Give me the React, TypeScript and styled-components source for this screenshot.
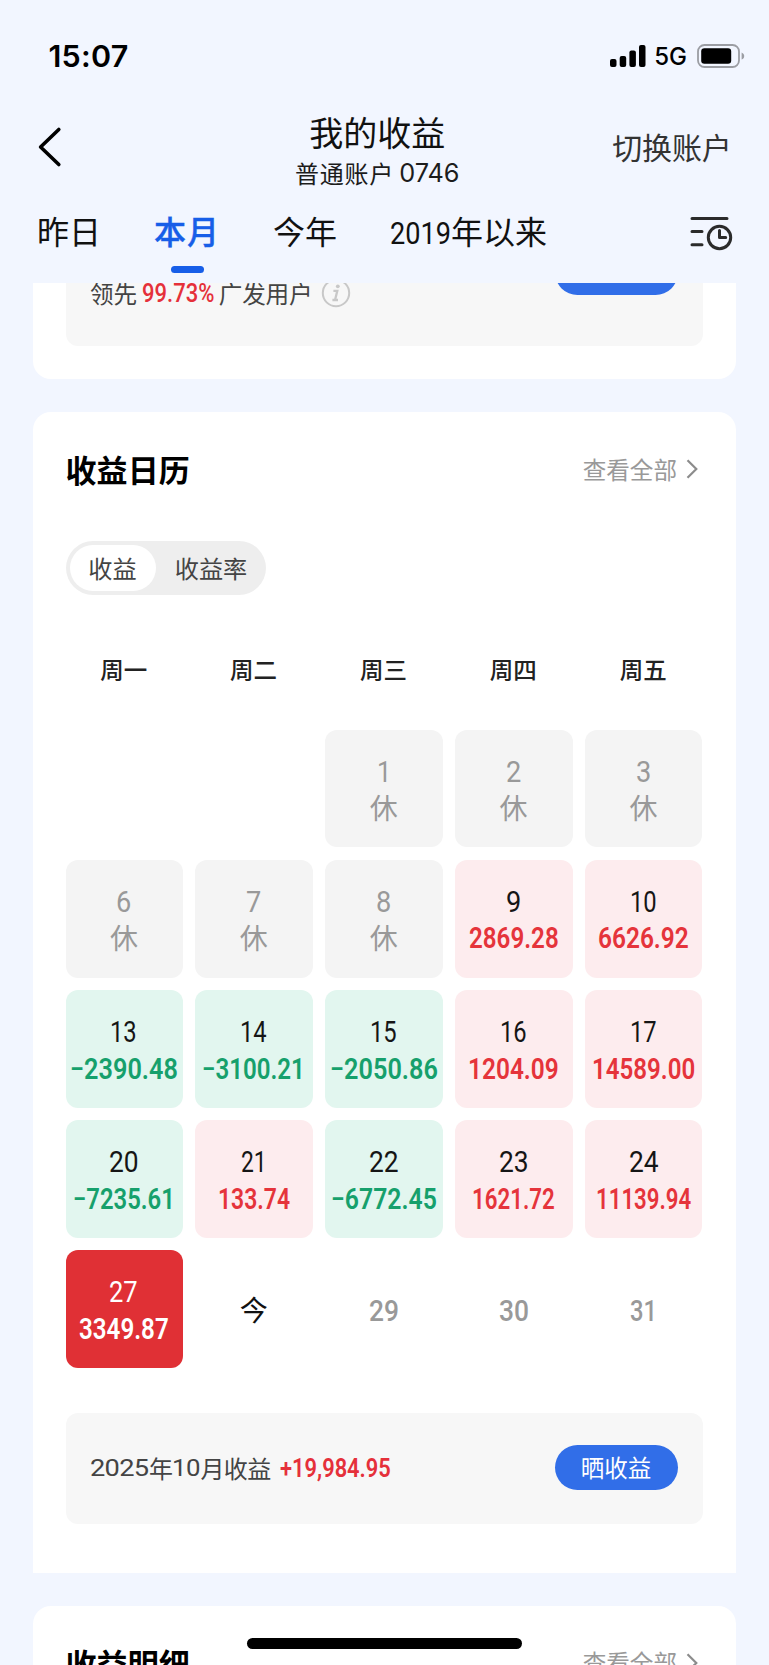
import React, { useLayoutEffect, useRef, useState } from "react";
import styled, { createGlobalStyle, css } from "styled-components";

const Global = createGlobalStyle`
  * { box-sizing: border-box; }
  html, body { margin: 0; padding: 0; background: #f2f6ff; }
  body { font-family: "Noto Sans CJK SC", sans-serif; color: #111; overflow: hidden; }
`;

const Screen = styled.div`
  width: 769px;
  height: 1665px;
  background: #f2f6ff;
  overflow: hidden;
  display: flex;
  flex-direction: column;
  position: relative;
`;

/* Condensed numerals: the text is squeezed to the given width */
const FitBox = styled.span<{ $w: number }>`
  display: inline-block;
  width: ${(p) => p.$w}px;
  white-space: nowrap;
  font-family: Roboto, "Noto Sans CJK SC", sans-serif;
`;
const FitInner = styled.span`
  display: inline-block;
  transform-origin: 0 50%;
`;

function Fit({ w, children }: { w: number; children: React.ReactNode }) {
  const ref = useRef<HTMLSpanElement>(null);
  const [scale, setScale] = useState(1);
  useLayoutEffect(() => {
    if (ref.current) setScale(w / ref.current.offsetWidth);
  }, [w, children]);
  return (
    <FitBox $w={w}>
      <FitInner ref={ref} style={{ transform: `scaleX(${scale})` }}>
        {children}
      </FitInner>
    </FitBox>
  );
}

const StatusBar = styled.div`
  height: 112px;
  flex: none;
  display: flex;
  justify-content: space-between;
  align-items: center;
  padding: 0 23px 0 48.5px;
  font-family: Inter, sans-serif;
  color: #000;
`;
const Clock = styled.div`
  font-size: 30.5px;
  font-weight: 600;
  line-height: 36px;
  letter-spacing: 0.2px;
`;
const StatusIcons = styled.div`
  display: flex;
  align-items: center;
`;
const Network = styled.span`
  font-size: 24px;
  font-weight: 500;
  line-height: 28px;
  margin: 2px 10px 0 8px;
`;

const NavBar = styled.div`
  height: 82px;
  flex: none;
  display: grid;
  grid-template-columns: 1fr 200px 1fr;
  align-items: start;
  padding: 0 37.5px 0 36px;
`;
const Back = styled.div`
  padding-top: 14px;
  svg { display: block; }
`;
const NavTitles = styled.div`
  display: flex;
  flex-direction: column;
  align-items: center;
  margin-left: -13px;
`;
const Title = styled.div`
  font-size: 34px;
  line-height: 44px;
  margin-top: -2.5px;
  white-space: nowrap;
`;
const SubTitle = styled.div`
  font-size: 24px;
  line-height: 36px;
  letter-spacing: 0.8px;
  margin-top: 1.5px;
  white-space: nowrap;
  display: flex;
  color: #1c1c1c;
`;
const SubNumber = styled.span`
  font-family: Inter, sans-serif;
  font-size: 25.3px;
  letter-spacing: 0;
  margin-left: 5px;
`;
const Switch = styled.div`
  justify-self: end;
  font-size: 30px;
  line-height: 40px;
  padding-top: 13.5px;
  letter-spacing: -0.2px;
  color: #333;
  white-space: nowrap;
`;

const Tabs = styled.div`
  height: 89px;
  flex: none;
  display: flex;
  align-items: flex-start;
  padding: 16px 36.5px 0 37px;
`;
const Tab = styled.div<{ $active?: boolean; $gap: number }>`
  display: flex;
  flex-direction: column;
  align-items: center;
  margin-right: ${(p) => p.$gap}px;
  font-size: 32px;
  line-height: 41px;
  white-space: nowrap;
  ${(p) =>
    p.$active &&
    css`
      color: #175ee8;
      font-weight: 500;
      -webkit-text-stroke: 0.4px #175ee8;
      letter-spacing: 1px;
    `}
`;
const Underline = styled.div`
  width: 33px;
  height: 7px;
  border-radius: 3.5px;
  background: #175ee8;
  margin: 15px 0 0 1px;
`;
const FilterIcon = styled.div`
  margin: 3px 0 0 auto;
  svg { display: block; }
`;

const Scroll = styled.div`
  flex: 1;
  min-height: 0;
  overflow: hidden;
  padding: 0 33.5px 0 33px;
`;
const Card = styled.div<{ $square?: boolean; $h: number; $tail?: boolean }>`
  height: ${(p) => p.$h}px;
  background: #fff;
  border-radius: ${(p) => (p.$tail ? "0 0 18px 18px" : p.$square ? "18px 18px 0 0" : "18px")};
  padding: 0 33px 0 32.5px;
  margin-bottom: 32.9px;
`;
const RankBox = styled.div`
  height: 63px;
  background: #f7f7f7;
  border-radius: 0 0 12px 12px;
  padding: 0 25px 0 24.5px;
  display: flex;
  justify-content: space-between;
  align-items: flex-start;
`;
const SummaryBox = styled.div`
  height: 111px;
  background: #f7f7f7;
  border-radius: 12px;
  margin-top: 44.9px;
  padding: 0 25px 0 24.5px;
  display: flex;
  justify-content: space-between;
  align-items: center;
`;
const Line = styled.div<{ $rank?: boolean }>`
  display: flex;
  align-items: center;
  font-size: ${(p) => (p.$rank ? 23.6 : 24)}px;
  line-height: 34px;
  letter-spacing: ${(p) => (p.$rank ? "-0.2px" : "-0.6px")};
  margin-top: ${(p) => (p.$rank ? "-6.8px" : "-0.5px")};
  color: #444;
  white-space: nowrap;
`;
const Up = styled.span<{ $rank?: boolean }>`
  color: #e5303a;
  font-size: 26px;
  font-weight: ${(p) => (p.$rank ? 500 : 600)};
  letter-spacing: 0;
  margin: 0 5px 0 ${(p) => (p.$rank ? 5 : 9)}px;
  display: inline-flex;
`;
const InfoIcon = styled.span`
  margin-left: 9px;
  svg { display: block; }
`;
const Pill = styled.div<{ $clipped?: boolean }>`
  width: 123px;
  height: 45px;
  flex: none;
  border-radius: 22.5px;
  background: #316ee8;
  color: #fff;
  font-size: 23.5px;
  line-height: 44px;
  text-align: center;
  margin-top: ${(p) => (p.$clipped ? "-33px" : "-1px")};
`;

const CardHead = styled.div`
  display: flex;
  justify-content: space-between;
  align-items: center;
  padding-top: 37px;
  height: 80px;
`;
const CardTitle = styled.div`
  font-size: 31px;
  line-height: 44px;
  font-weight: 700;
  color: #000;
  white-space: nowrap;
  letter-spacing: 0.1px;
  margin-top: -3px;
`;
const More = styled.div`
  display: flex;
  align-items: center;
  font-size: 23.6px;
  line-height: 34px;
  color: #999;
  padding-right: 4.5px;
  margin-top: -4px;
  white-space: nowrap;
  svg { margin: 1px 0 0 9px; }
`;

const Segmented = styled.div`
  width: 200.5px;
  height: 53.5px;
  margin-top: 49px;
  border-radius: 27px;
  background: #eee;
  padding: 4px;
  display: flex;
`;
const Segment = styled.div<{ $on?: boolean }>`
  flex: none;
  width: ${(p) => (p.$on ? 86 : 111)}px;
  height: 45.5px;
  border-radius: 23px;
  background: ${(p) => (p.$on ? "#fff" : "transparent")};
  font-size: 24.2px;
  line-height: 46px;
  text-align: center;
  color: #444;
`;

const Grid = styled.div`
  display: grid;
  grid-template-columns: repeat(5, 117.4px);
  column-gap: 12.5px;
  row-gap: 12.5px;
`;
const WeekRow = styled(Grid)`
  margin-top: 54.8px;
  margin-bottom: 40.4px;
`;
const Weekday = styled.div`
  text-align: center;
  font-size: 23.5px;
  line-height: 40px;
  font-weight: 500;
  padding-right: 1px;
  color: #222;
`;

type Kind = "rest" | "up" | "down" | "selected" | "plain" | "none";
const fills: Record<Kind, string> = {
  rest: "#f4f4f4",
  up: "#fdecee",
  down: "#e2f6ef",
  selected: "#e03035",
  plain: "transparent",
  none: "transparent",
};
const dateInk: Record<Kind, string> = {
  rest: "#999",
  up: "#151515",
  down: "#151515",
  selected: "#fff",
  plain: "#999",
  none: "#999",
};
const amountInk: Record<Kind, string> = {
  rest: "#999",
  up: "#e5343b",
  down: "#16a06c",
  selected: "#fff",
  plain: "#999",
  none: "#999",
};
const Cell = styled.div<{ $kind: Kind }>`
  height: 117.6px;
  border-radius: 12px;
  background: ${(p) => fills[p.$kind]};
  display: flex;
  flex-direction: column;
  align-items: center;
  padding: 21px 0.5px 0 0;
`;
const DateNo = styled.div<{ $kind: Kind }>`
  font-size: 29px;
  line-height: 36px;
  height: 36px;
  color: ${(p) => dateInk[p.$kind]};
`;
const Amount = styled.div<{ $kind: Kind }>`
  font-size: 29px;
  line-height: 36px;
  font-weight: 600;
  margin-top: 0.5px;
  color: ${(p) => amountInk[p.$kind]};
`;
const Rest = styled.div`
  font-size: 28px;
  line-height: 36px;
  margin-top: 2.4px;
  color: #999;
`;
const Future = styled.div<{ $today?: boolean }>`
  font-size: ${(p) => (p.$today ? 28 : 29)}px;
  line-height: 36px;
  margin-top: ${(p) => (p.$today ? 20 : 19)}px;
  font-weight: ${(p) => (p.$today ? 400 : 500)};
  color: ${(p) => (p.$today ? "#111" : "#999")};
`;

const HomeBar = styled.div`
  position: absolute;
  left: 247px;
  top: 1638px;
  width: 275px;
  height: 10.5px;
  border-radius: 6px;
  background: #000;
`;

interface Day {
  kind: Kind;
  d?: string;
  dw?: number;
  amt?: string;
  aw?: number;
}

const days: Day[] = [
  { kind: "none" },
  { kind: "none" },
  { kind: "rest", d: "1", dw: 14 },
  { kind: "rest", d: "2", dw: 15 },
  { kind: "rest", d: "3", dw: 15 },
  { kind: "rest", d: "6", dw: 15 },
  { kind: "rest", d: "7", dw: 15 },
  { kind: "rest", d: "8", dw: 15 },
  { kind: "up", d: "9", dw: 15, amt: "2869.28", aw: 90 },
  { kind: "up", d: "10", dw: 27, amt: "6626.92", aw: 91 },
  { kind: "down", d: "13", dw: 27, amt: "−2390.48", aw: 108 },
  { kind: "down", d: "14", dw: 27, amt: "−3100.21", aw: 103 },
  { kind: "down", d: "15", dw: 27, amt: "−2050.86", aw: 108 },
  { kind: "up", d: "16", dw: 27, amt: "1204.09", aw: 91 },
  { kind: "up", d: "17", dw: 27, amt: "14589.00", aw: 103 },
  { kind: "down", d: "20", dw: 30, amt: "−7235.61", aw: 102 },
  { kind: "up", d: "21", dw: 26, amt: "133.74", aw: 72 },
  { kind: "down", d: "22", dw: 30, amt: "−6772.45", aw: 106 },
  { kind: "up", d: "23", dw: 30, amt: "1621.72", aw: 83 },
  { kind: "up", d: "24", dw: 30, amt: "11139.94", aw: 95 },
  { kind: "selected", d: "27", dw: 29, amt: "3349.87", aw: 90 },
  { kind: "plain", d: "今" },
  { kind: "plain", d: "29", dw: 30 },
  { kind: "plain", d: "30", dw: 30 },
  { kind: "plain", d: "31", dw: 27 },
];

function DayCell({ day }: { day: Day }) {
  const { kind, d, dw, amt, aw } = day;
  if (kind === "none") return <Cell $kind={kind} />;
  if (kind === "plain") {
    return (
      <Cell $kind={kind}>
        <Future $today={!dw}>{dw ? <Fit w={dw}>{d}</Fit> : d}</Future>
      </Cell>
    );
  }
  return (
    <Cell $kind={kind}>
      <DateNo $kind={kind}>
        <Fit w={dw!}>{d}</Fit>
      </DateNo>
      {amt ? (
        <Amount $kind={kind}>
          <Fit w={aw!}>{amt}</Fit>
        </Amount>
      ) : (
        <Rest>休</Rest>
      )}
    </Cell>
  );
}

function ViewAll() {
  return (
    <More>
      查看全部
      <svg width="12" height="20" viewBox="0 0 12 20" fill="none" stroke="#8c8c8c" strokeWidth="2.2">
        <path d="M1.5 1.2 10.3 10 1.5 18.8" />
      </svg>
    </More>
  );
}

export default function App() {
  return (
    <>
      <Global />
      <Screen>
        <StatusBar>
          <Clock>15:07</Clock>
          <StatusIcons>
            <svg width="36" height="24" viewBox="0 0 36 24" fill="#000">
              <rect x="0" y="15" width="6.5" height="8" rx="2" />
              <rect x="9.7" y="12" width="6.5" height="11" rx="2" />
              <rect x="19.4" y="6.5" width="6.5" height="16.5" rx="2" />
              <rect x="29" y="1" width="6.5" height="22" rx="2" />
            </svg>
            <Network>5G</Network>
            <svg width="49" height="24" viewBox="0 0 49 24">
              <rect x="1" y="1" width="41" height="22" rx="6.5" fill="none" stroke="#9b9da3" strokeWidth="1.8" />
              <rect x="4.2" y="4.3" width="30" height="15.4" rx="3.2" fill="#000" />
              <path d="M44.6 8.4c1.7.7 2.6 2 2.6 3.6s-.9 2.9-2.6 3.6z" fill="#9b9da3" />
            </svg>
          </StatusIcons>
        </StatusBar>

        <NavBar>
          <Back>
            <svg width="26" height="42" viewBox="0 0 26 42" fill="none" stroke="#000" strokeWidth="3.6" strokeLinecap="round" strokeLinejoin="round">
              <path d="M22.8 3.5 4.6 21l18.2 17.5" />
            </svg>
          </Back>
          <NavTitles>
            <Title>我的收益</Title>
            <SubTitle>
              普通账户<SubNumber>0746</SubNumber>
            </SubTitle>
          </NavTitles>
          <Switch>切换账户</Switch>
        </NavBar>

        <Tabs>
          <Tab $gap={53}>昨日</Tab>
          <Tab $gap={53} $active>
            本月
            <Underline />
          </Tab>
          <Tab $gap={53}>今年</Tab>
          <Tab $gap={0}>
            <span>
              <Fit w={61}>2019</Fit>年以来
            </span>
          </Tab>
          <FilterIcon>
            <svg width="44" height="38" viewBox="0 0 44 38" fill="none" stroke="#2b2b2b" strokeWidth="3" strokeLinecap="round">
              <path d="M3 5.5h35M3 18.5h10M3 31.7h10" />
              <circle cx="30.5" cy="24.5" r="11.2" />
              <path d="M30.5 17.5v7h6.2" strokeLinejoin="round" />
            </svg>
          </FilterIcon>
        </Tabs>

        <Scroll>
          <Card $h={96.3} $tail>
            <RankBox>
              <Line $rank>
                领先
                <Up $rank>
                  <Fit w={72}>99.73%</Fit>
                </Up>
                广发用户
                <InfoIcon>
                  <svg width="30" height="30" viewBox="0 0 30 30" fill="none" stroke="#c8c8c8" strokeWidth="2">
                    <circle cx="15" cy="15" r="13.2" />
                    <circle cx="16.8" cy="8.3" r="1.9" fill="#c8c8c8" stroke="none" />
                    <path d="M12.4 12.9h3.9l-2.2 8.8M11.4 22h5.6" strokeWidth="2.3" />
                  </svg>
                </InfoIcon>
              </Line>
              <Pill $clipped />
            </RankBox>
          </Card>

          <Card $h={1160.8} $square>
            <CardHead>
              <CardTitle>收益日历</CardTitle>
              <ViewAll />
            </CardHead>
            <Segmented>
              <Segment $on>收益</Segment>
              <Segment>收益率</Segment>
            </Segmented>
            <WeekRow>
              {["周一", "周二", "周三", "周四", "周五"].map((w) => (
                <Weekday key={w}>{w}</Weekday>
              ))}
            </WeekRow>
            <Grid>
              {days.map((day, i) => (
                <DayCell key={i} day={day} />
              ))}
            </Grid>
            <SummaryBox>
              <Line>
                <Fit w={59}>2025</Fit>年<Fit w={28}>10</Fit>月收益
                <Up>
                  <Fit w={111}>+19,984.95</Fit>
                </Up>
              </Line>
              <Pill>晒收益</Pill>
            </SummaryBox>
          </Card>

          <Card $h={300}>
            <CardHead>
              <CardTitle>收益明细</CardTitle>
              <ViewAll />
            </CardHead>
          </Card>
        </Scroll>
        <HomeBar />
      </Screen>
    </>
  );
}
